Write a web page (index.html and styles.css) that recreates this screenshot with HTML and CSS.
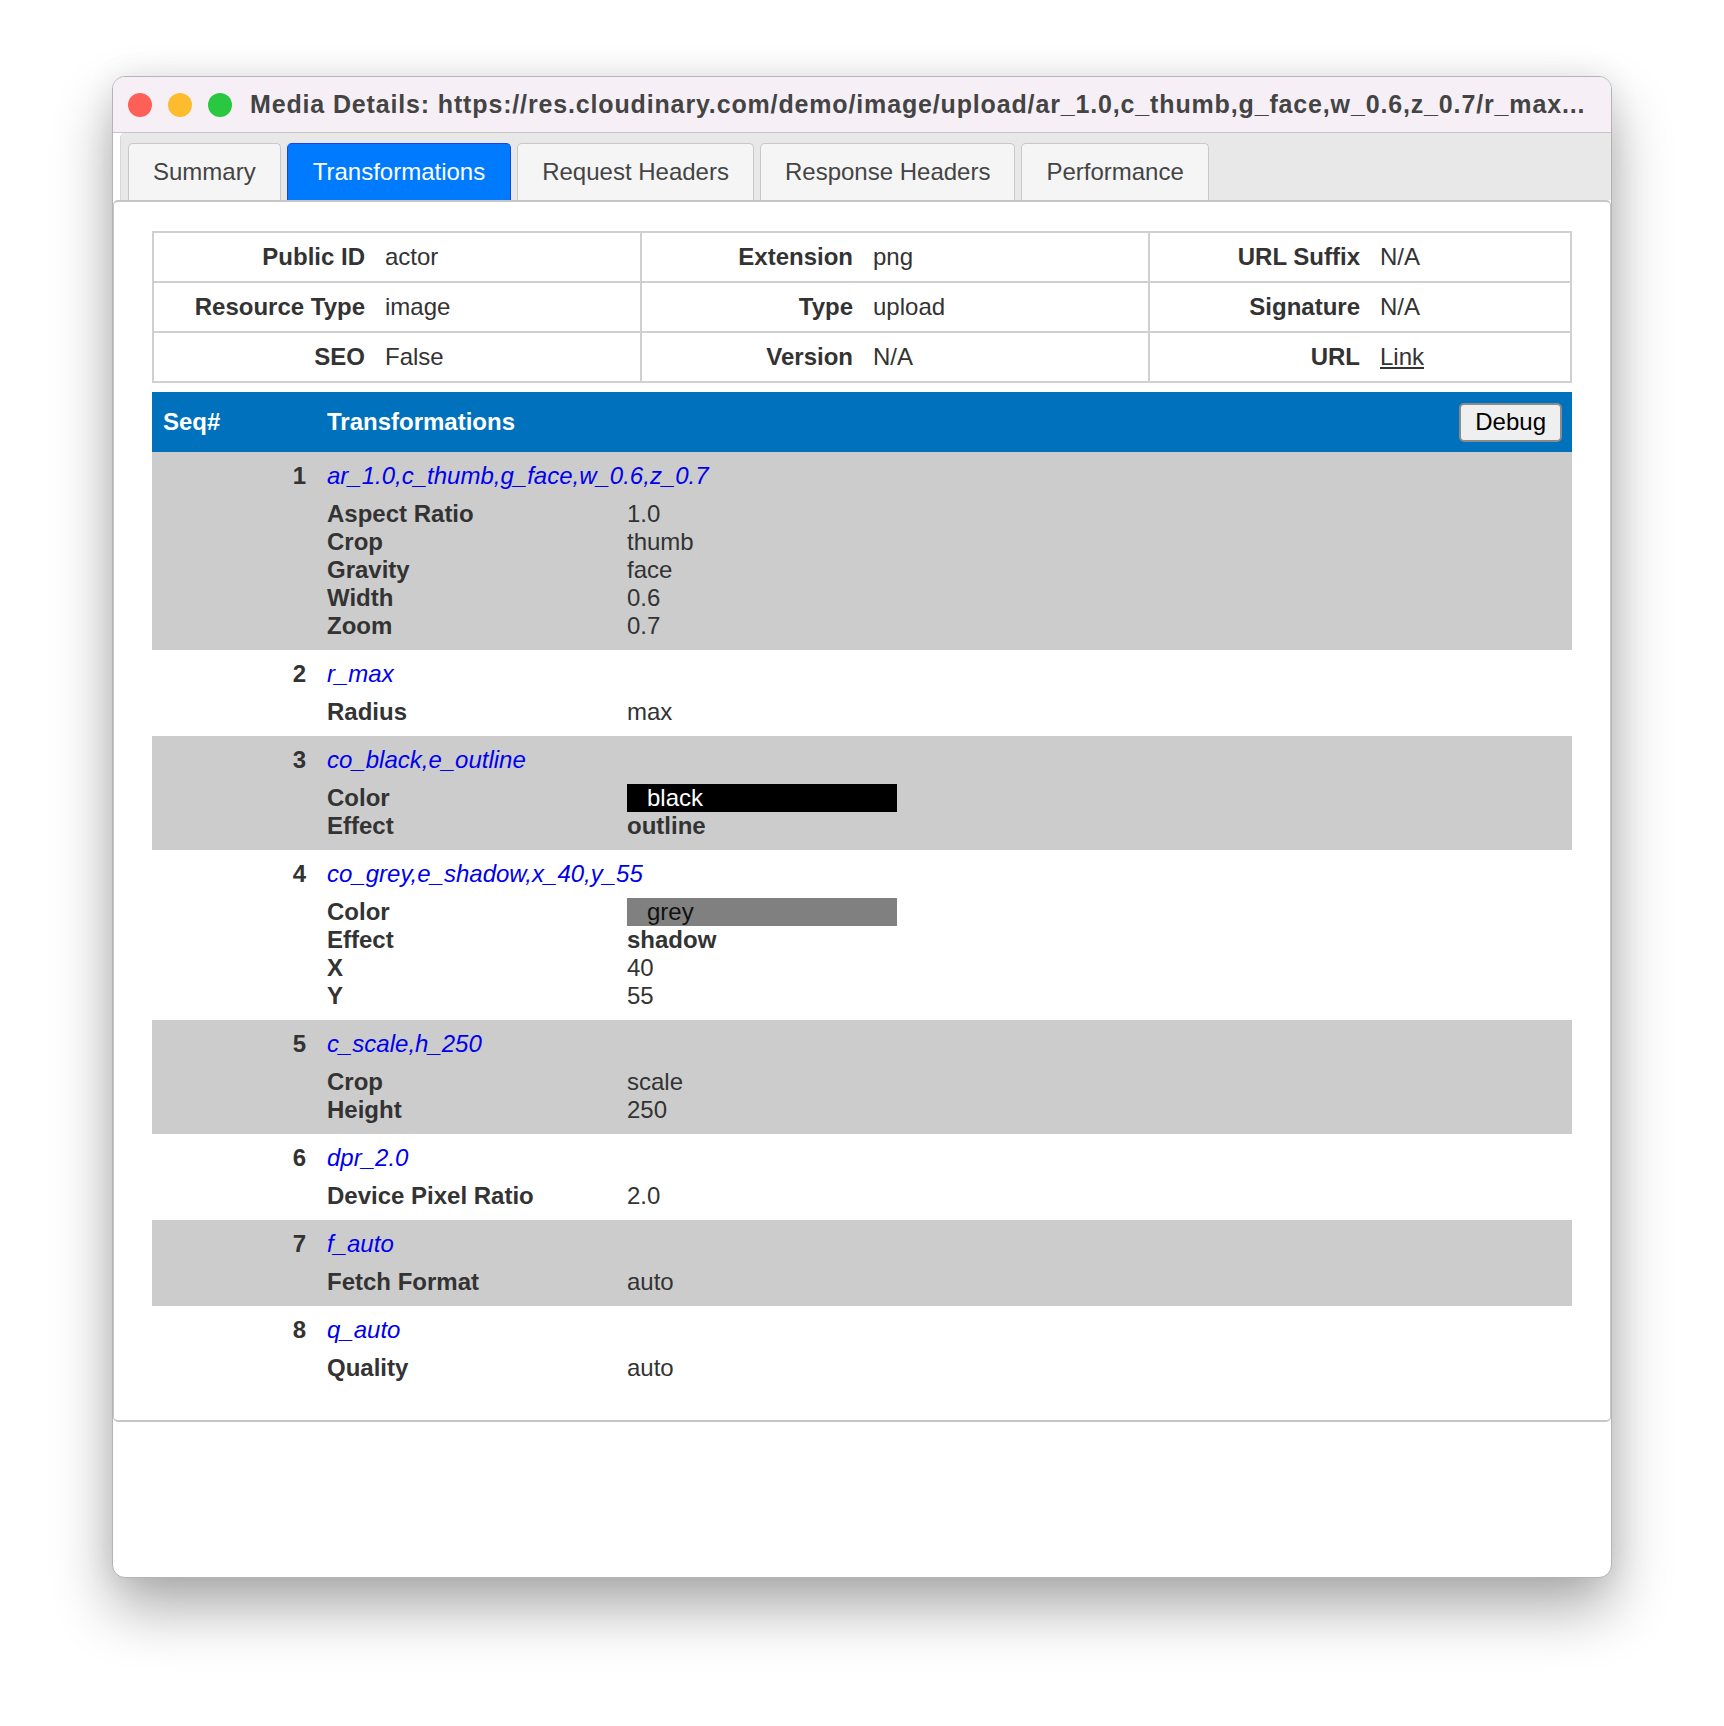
FILE: index.html
```html
<!DOCTYPE html>
<html>
<head>
  <meta charset="utf-8">
  <title>Media Details</title>
  <link rel="stylesheet" href="styles.css">
</head>
<body>
<div class="window">
  <div class="titlebar">
    <span class="light red"></span>
    <span class="light yellow"></span>
    <span class="light green"></span>
    <span class="title">Media Details: https://res.cloudinary.com/demo/image/upload/ar_1.0,c_thumb,g_face,w_0.6,z_0.7/r_max...</span>
  </div>

  <div class="tabstrip">
    <div class="tab">Summary</div>
    <div class="tab active">Transformations</div>
    <div class="tab">Request Headers</div>
    <div class="tab">Response Headers</div>
    <div class="tab">Performance</div>
  </div>

  <div class="panel">
    <!--基本信息-->
    <div class="info">
      <div class="k">Public ID</div><div class="v">actor</div>
      <div class="k">Extension</div><div class="v">png</div>
      <div class="k">URL Suffix</div><div class="v last">N/A</div>
      <div class="k">Resource Type</div><div class="v">image</div>
      <div class="k">Type</div><div class="v">upload</div>
      <div class="k">Signature</div><div class="v last">N/A</div>
      <div class="k bottom">SEO</div><div class="v bottom">False</div>
      <div class="k bottom">Version</div><div class="v bottom">N/A</div>
      <div class="k bottom">URL</div><div class="v bottom last"><a href="#">Link</a></div>
    </div>

    <!--变换列表-->
    <div class="trans">
      <div class="trans-head">
        <div class="seq-h">Seq#</div>
        <div class="name-h">Transformations <button class="debug">Debug</button></div>
      </div>

      <div class="step odd">
        <div class="num">1</div>
        <div class="body">
          <a class="code" href="#">ar_1.0,c_thumb,g_face,w_0.6,z_0.7</a>
          <div class="params">
            <div class="pk">Aspect Ratio</div><div class="pv">1.0</div>
            <div class="pk">Crop</div><div class="pv">thumb</div>
            <div class="pk">Gravity</div><div class="pv">face</div>
            <div class="pk">Width</div><div class="pv">0.6</div>
            <div class="pk">Zoom</div><div class="pv">0.7</div>
          </div>
        </div>
      </div>

      <div class="step">
        <div class="num">2</div>
        <div class="body">
          <a class="code" href="#">r_max</a>
          <div class="params">
            <div class="pk">Radius</div><div class="pv">max</div>
          </div>
        </div>
      </div>

      <div class="step odd">
        <div class="num">3</div>
        <div class="body">
          <a class="code" href="#">co_black,e_outline</a>
          <div class="params">
            <div class="pk">Color</div><div class="pv"><span class="swatch sw-black">black</span></div>
            <div class="pk">Effect</div><div class="pv strong">outline</div>
          </div>
        </div>
      </div>

      <div class="step">
        <div class="num">4</div>
        <div class="body">
          <a class="code" href="#">co_grey,e_shadow,x_40,y_55</a>
          <div class="params">
            <div class="pk">Color</div><div class="pv"><span class="swatch sw-grey">grey</span></div>
            <div class="pk">Effect</div><div class="pv strong">shadow</div>
            <div class="pk">X</div><div class="pv">40</div>
            <div class="pk">Y</div><div class="pv">55</div>
          </div>
        </div>
      </div>

      <div class="step odd">
        <div class="num">5</div>
        <div class="body">
          <a class="code" href="#">c_scale,h_250</a>
          <div class="params">
            <div class="pk">Crop</div><div class="pv">scale</div>
            <div class="pk">Height</div><div class="pv">250</div>
          </div>
        </div>
      </div>

      <div class="step">
        <div class="num">6</div>
        <div class="body">
          <a class="code" href="#">dpr_2.0</a>
          <div class="params">
            <div class="pk">Device Pixel Ratio</div><div class="pv">2.0</div>
          </div>
        </div>
      </div>

      <div class="step odd">
        <div class="num">7</div>
        <div class="body">
          <a class="code" href="#">f_auto</a>
          <div class="params">
            <div class="pk">Fetch Format</div><div class="pv">auto</div>
          </div>
        </div>
      </div>

      <div class="step">
        <div class="num">8</div>
        <div class="body">
          <a class="code" href="#">q_auto</a>
          <div class="params">
            <div class="pk">Quality</div><div class="pv">auto</div>
          </div>
        </div>
      </div>
    </div>
  </div>
</div>
</body>
</html>
```

FILE: styles.css
```css
/*1.页面初始化*/
body{
	margin:0;
	padding:76px 0 148px 112px;
	background:#fff;
	font-family:"Liberation Sans",Arial,Helvetica,sans-serif;
	color:#333;
}
a{color:#333;}

/*2.窗口*/
.window{
	width:1498px;
	height:1500px;
	border:1px solid #b4b4b4;
	border-radius:13px;
	overflow:hidden;
	background:#fff;
	box-shadow:0 30px 60px rgba(0,0,0,0.33),0 0 30px rgba(0,0,0,0.08);
}

/*2-1.标题栏*/
.titlebar{
	display:flex;
	align-items:center;
	height:55px;
	padding-left:15px;
	background:#f6f0f6;
	border-bottom:1px solid #c6c6c6;
}
.light{
	width:24px;
	height:24px;
	border-radius:50%;
	margin-right:16px;
}
.red{background:#fe5f57;}
.yellow{background:#fdbc2e;}
.green{background:#29c840;margin-right:18px;}
.title{
	font-size:25px;
	font-weight:bold;
	letter-spacing:0.85px;
	color:#444;
	white-space:nowrap;
}

/*2-2.标签栏*/
.tabstrip{
	display:flex;
	align-items:flex-end;
	height:67px;
	margin-left:7px;
	padding-left:7px;
	background:#e8e8e8;
	border-left:1px solid #d6d6d6;
	border-top-left-radius:5px;
}
.tab{
	height:56px;
	line-height:56px;
	margin-right:6px;
	padding:0 24px;
	border:1px solid #c8c8c8;
	border-bottom:none;
	border-radius:5px 5px 0 0;
	background:#f5f5f5;
	font-size:24px;
	color:#444;
}
.tab.active{
	padding:0 25px;
	background:#007bff;
	border-color:#1e40e8;
	color:#fff;
}

/*3.内容面板*/
.panel{
	padding:29px 38px 28px 38px;
	border:1px solid #c6c6c6;
	border-top-width:2px;
	border-bottom-width:2px;
	border-radius:5px;
	font-size:24px;
}

/*3-1.基本信息表*/
.info{
	display:grid;
	grid-template-columns:221px 267px 221px 287px 220px 1fr;
	border:2px solid #d0d0d0;
}
.info .k,.info .v{
	height:48px;
	line-height:47px;
	border-bottom:2px solid #d0d0d0;
}
.info .k{
	padding-right:10px;
	text-align:right;
	font-weight:bold;
}
.info .v{
	padding-left:10px;
	border-right:2px solid #d0d0d0;
}
.info .last{border-right:none;}
.info .bottom{border-bottom:none;}

/*3-2.变换列表*/
.trans{margin-top:9px;}
.trans-head{
	display:grid;
	grid-template-columns:165px 1fr;
	align-items:center;
	height:60px;
	background:#0071bc;
	color:#fff;
	font-weight:bold;
}
.seq-h{padding-left:11px;}
.name-h{
	display:flex;
	justify-content:space-between;
	align-items:center;
	padding:0 10px;
}
.debug{
	height:39px;
	padding:0 14px;
	border:2px solid #8a8a8a;
	border-radius:5px;
	background:#efefef;
	font:24px "Liberation Sans",Arial,sans-serif;
	color:#000;
}
.step{
	display:grid;
	grid-template-columns:165px 1fr;
	padding:10px 0;
	line-height:28px;
}
.step.odd{background:#ccc;}
.num{
	padding-right:11px;
	text-align:right;
	font-weight:bold;
}
.body{padding-left:10px;}
.code{
	color:#0000ee;
	font-style:italic;
	text-decoration:none;
}
.params{
	display:grid;
	grid-template-columns:300px 1fr;
	margin-top:10px;
}
.pk{font-weight:bold;}
.pv.strong{font-weight:bold;}

/*3-3.颜色块*/
.swatch{
	display:block;
	width:250px;
	height:28px;
	padding-left:20px;
}
.sw-black{background:#000;color:#fff;}
.sw-grey{background:#808080;color:#111;}
```
